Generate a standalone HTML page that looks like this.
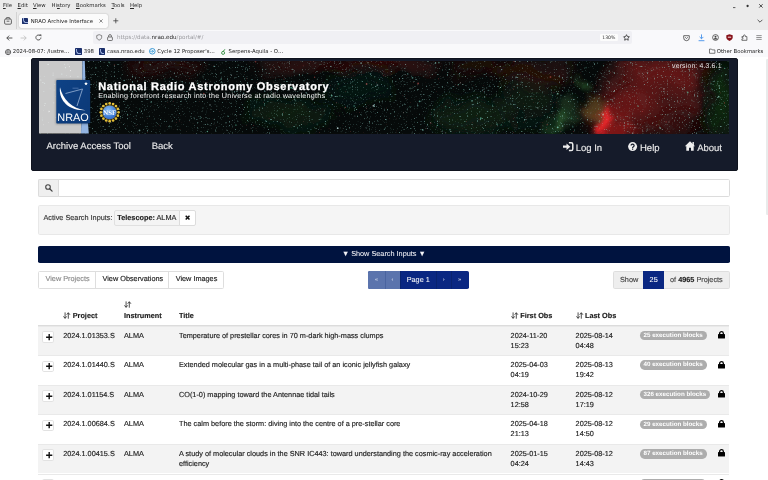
<!DOCTYPE html>
<html lang="en">
<head>
<meta charset="utf-8">
<title>NRAO Archive Interface</title>
<style>
*{box-sizing:border-box;margin:0;padding:0}
html,body{width:768px;height:480px;overflow:hidden;background:#fff}
body{position:relative;font-family:"Liberation Sans",sans-serif;color:#111;text-rendering:geometricPrecision}
#all{position:absolute;left:0;top:0;width:768px;height:480px;will-change:transform}
svg{display:block;overflow:visible}
/* ---------- browser chrome ---------- */
#chrome{position:absolute;left:0;top:0;width:768px;height:57px;background:#ebebeb;font-family:"DejaVu Sans","Liberation Sans",sans-serif;color:#222;overflow:hidden}
#menubar span{position:absolute;top:2.3px;font-size:5.33px;line-height:8px;color:#2a2a2a;white-space:nowrap}
.ic{position:absolute}
#tabsep{position:absolute;left:16.4px;top:12px;width:.6px;height:17px;background:#d2d2d2}
#tab{position:absolute;left:19px;top:13.7px;width:88.5px;height:14.3px;background:#fbfbfb;border-radius:2px;box-shadow:0 0 1.5px rgba(0,0,0,.32)}
.fav{position:absolute;width:6.3px;height:6.3px;background:#1b2f6b;border-radius:.4px}
.fav:after{content:"";position:absolute;left:1px;top:.8px;width:3.6px;height:3.6px;border-left:.6px solid #9fb2dd;border-bottom:.6px solid #9fb2dd;border-radius:0 0 0 3.6px}
#navbar{position:absolute;left:0;top:29.5px;width:768px;height:27.5px;background:#f9f9fb}
#urlbar{position:absolute;left:92.5px;top:31.4px;width:539.2px;height:12.2px;background:#f0f0f4;border-radius:2px}
.cfs{font-size:5.33px;line-height:8px;white-space:nowrap}
#zoomb{position:absolute;left:507.2px;top:2.3px;width:18.2px;height:7.5px;background:#fff;border-radius:1.2px;font-size:4.6px;line-height:10.1px;text-align:center;color:#333;background:#fcfcfc}
.bm{position:absolute;top:48.2px;font-size:5.33px;line-height:8px;color:#222;white-space:nowrap}
/* ---------- page ---------- */
#hdr{position:absolute;left:31px;top:57.5px;width:706.5px;height:113px;background:#151b2a;border-radius:2px;border:1px solid #0f131e}
#banner{position:absolute;left:38.6px;top:61px;width:690.5px;height:72.6px;overflow:hidden;background:#0a0d0a}
#banner svg{position:absolute;left:0;top:0}
.nav{position:absolute;font-size:9.5px;line-height:12px;color:#ececec;white-space:nowrap;-webkit-text-stroke:.12px currentColor}
.box{position:absolute;border:1px solid #e2e2e2;border-radius:1.6px}
.t{position:absolute;font-size:7.3px;line-height:10px;color:#1a1a1a;white-space:nowrap;-webkit-text-stroke:.14px currentColor}
.b{font-weight:bold}
.sort{position:absolute;width:7.4px;height:7.1px}
.row{position:absolute;left:38.2px;width:691.3px;height:29.6px}
.row:before{content:"";position:absolute;left:0;top:0;width:100%;height:1px;background:#e9e9e9}
.row.odd{background:#f3f3f3}
.row .t{top:5px}
.row .t.l2{top:15.2px}
.plus{position:absolute;left:4.3px;top:5.5px;width:12px;height:11.5px;background:#fff;border:1px solid #e2e2e2;border-radius:1.8px}
.badge{position:absolute;left:601.5px;top:5.4px;height:9.4px;border-radius:4.7px;background:#adadad;color:#fff;font-size:6.24px;font-weight:bold;line-height:9.3px;padding:0 3.8px;white-space:nowrap}
.lock{position:absolute;left:679.9px;top:5.5px;width:7px;height:7.6px;filter:drop-shadow(0 0 .6px #fff) drop-shadow(0 0 .6px #fff)}
#scroll{position:absolute;left:765.8px;top:59px;width:3px;height:156px;background:#e9ebeb;border-radius:1.2px 0 0 1.2px}
#scroll div{display:none}
.plus svg{position:absolute;left:2.4px;top:1.7px;width:6.4px;height:6.4px}
.t.pg{font-size:5.6px;-webkit-text-stroke:0}
.t.w{-webkit-text-stroke:.04px currentColor}
</style>
</head>
<body>
<div id="all">
<div id="chrome">
  <div id="menubar">
    <span style="left:3px"><u>F</u>ile</span>
    <span style="left:17.5px"><u>E</u>dit</span>
    <span style="left:33px"><u>V</u>iew</span>
    <span style="left:51.5px">Hi<u>s</u>tory</span>
    <span style="left:76px"><u>B</u>ookmarks</span>
    <span style="left:111.5px"><u>T</u>ools</span>
    <span style="left:130px"><u>H</u>elp</span>
  </div>
  <svg class="ic" style="left:733px;top:3px;width:30px;height:8px" viewBox="0 0 30 8"><path d="M0 4.6h2.4" stroke="#333" stroke-width=".8"/><circle cx="14.6" cy="3" r="1.15" fill="#333"/><path d="M26.2 1.2l3.4 3.4M29.6 1.2l-3.4 3.4" stroke="#222" stroke-width=".8"/></svg>
  <svg class="ic" style="left:757px;top:18.5px;width:6px;height:4px" viewBox="0 0 6 4"><path d="M.6.8L3 3.2 5.4.8" fill="none" stroke="#333" stroke-width=".8"/></svg>
  <svg class="ic" style="left:4px;top:16.5px;width:8px;height:8px" viewBox="0 0 8 8"><rect x=".6" y="2" width="6.8" height="5.2" rx="1.2" fill="none" stroke="#444" stroke-width=".8"/><path d="M2.2 2V1.2a.6.6 0 0 1 .6-.6h2.4a.6.6 0 0 1 .6.6V2M2.6 4.2h2.8" fill="none" stroke="#444" stroke-width=".8"/></svg>
  <div id="tabsep"></div>
  <div id="tab">
    <span class="fav" style="left:3px;top:4px"></span>
    <span class="cfs" style="position:absolute;left:11.7px;top:4.4px;color:#222">NRAO Archive Interface</span>
    <svg class="ic" style="left:79.5px;top:5.2px;width:4px;height:4px" viewBox="0 0 4 4"><path d="M.4.4l3.2 3.2M3.6.4L.4 3.6" stroke="#444" stroke-width=".6"/></svg>
  </div>
  <svg class="ic" style="left:112.5px;top:18px;width:5.6px;height:5.6px" viewBox="0 0 6 6"><path d="M3 .3v5.4M.3 3h5.4" stroke="#333" stroke-width=".8"/></svg>
  <div id="navbar"></div>
  <svg class="ic" style="left:5.9px;top:34.5px;width:7px;height:6px" viewBox="0 0 7 6"><path d="M6.4 3H.8M3.2.6L.8 3l2.4 2.4" fill="none" stroke="#333" stroke-width=".8"/></svg>
  <svg class="ic" style="left:19.9px;top:34.5px;width:7px;height:6px" viewBox="0 0 7 6"><path d="M.6 3h5.6M3.8.6L6.2 3 3.8 5.4" fill="none" stroke="#bdbdbd" stroke-width=".8"/></svg>
  <svg class="ic" style="left:35px;top:34px;width:7px;height:7px" viewBox="0 0 7 7"><path d="M5.9 3.5a2.5 2.5 0 1 1-.9-1.9" fill="none" stroke="#333" stroke-width=".8"/><path d="M4.2.5h2.1v2.1z" fill="#333"/></svg>
  <div id="urlbar">
    <svg class="ic" style="left:3.4px;top:3px;width:6.4px;height:6.6px" viewBox="0 0 7 7"><path d="M3.5.6L6.2 1.6V3.6C6.2 5 5 6 3.5 6.5 2 6 .8 5 .8 3.6V1.6z" fill="none" stroke="#555" stroke-width=".75"/></svg>
    <svg class="ic" style="left:14.5px;top:2.6px;width:6px;height:7px" viewBox="0 0 6 7"><rect x=".6" y="3" width="4.8" height="3.5" rx=".7" fill="none" stroke="#555" stroke-width=".8"/><path d="M1.6 3V2a1.4 1.4 0 0 1 2.8 0V3" fill="none" stroke="#555" stroke-width=".8"/></svg>
    <span class="cfs" style="position:absolute;left:24.5px;top:2.9px;font-size:5.62px;color:#9a9a9e">https://data.<span style="color:#222">nrao.edu</span>/portal/#/</span>
    <span id="zoomb">130%</span>
    <svg class="ic" style="left:530.1px;top:2.5px;width:7px;height:7px" viewBox="0 0 8 8"><path d="M4 .8l1 2.1 2.3.3-1.7 1.6.4 2.3L4 6 1.9 7.1l.4-2.3L.7 3.2 3 2.9z" fill="none" stroke="#333" stroke-width=".95" stroke-linejoin="round"/></svg>
  </div>
  <!-- toolbar icons right -->
  <svg class="ic" style="left:682.7px;top:34.5px;width:7px;height:6px" viewBox="0 0 7 6"><path d="M.7.7h5.6v2.2a2.8 2.8 0 0 1-5.6 0z" fill="none" stroke="#444" stroke-width=".8" stroke-linejoin="round"/><path d="M2.2 2.3l1.3 1.2 1.3-1.2" fill="none" stroke="#444" stroke-width=".8"/></svg>
  <svg class="ic" style="left:697.5px;top:33.8px;width:7px;height:7.4px" viewBox="0 0 7 7.4"><path d="M3.5.4v4.2M1.6 2.9l1.9 1.9 1.9-1.9M.6 6.7h5.8" fill="none" stroke="#3a8be8" stroke-width=".85"/></svg>
  <svg class="ic" style="left:711.6px;top:34px;width:7px;height:7px" viewBox="0 0 7 7"><circle cx="3.5" cy="3.5" r="2.9" fill="none" stroke="#444" stroke-width=".8"/><circle cx="3.5" cy="2.8" r="1" fill="#444"/><path d="M1.5 5.4a2.2 2.2 0 0 1 4 0z" fill="#444"/></svg>
  <svg class="ic" style="left:725.8px;top:34px;width:7px;height:7.2px" viewBox="0 0 7 7.2"><path d="M3.5.3L6.7 1.3V3.6C6.7 5.2 5.3 6.4 3.5 7 1.7 6.4.3 5.2.3 3.6V1.3z" fill="#86121a"/><rect x="1.8" y="2.6" width="3.4" height="1.4" rx=".5" fill="#d9a0a4"/></svg>
  <svg class="ic" style="left:740.6px;top:34px;width:7px;height:7px" viewBox="0 0 7 7"><path d="M.9 2.6h1.6v-.8a.9.9 0 0 1 1.8 0v.8h1.6v3.7H.9V4.9h.5a.7.7 0 0 0 0-1.4H.9z" fill="none" stroke="#444" stroke-width=".75" stroke-linejoin="round"/></svg>
  <svg class="ic" style="left:755.5px;top:35px;width:6px;height:5px" viewBox="0 0 6 5"><path d="M.3.6h5.4M.3 2.5h5.4M.3 4.4h5.4" stroke="#666" stroke-width=".7"/></svg>
  <!-- bookmarks -->
  <svg class="ic" style="left:5px;top:48.5px;width:6.2px;height:6.2px" viewBox="0 0 6.2 6.2"><circle cx="3.1" cy="3.1" r="2.6" fill="none" stroke="#444" stroke-width=".8"/><path d="M.5 3.1h5.2M3.1.5c-1.3 1.5-1.3 3.7 0 5.2M3.1.5c1.3 1.5 1.3 3.7 0 5.2" fill="none" stroke="#444" stroke-width=".55"/></svg>
  <span class="bm" style="left:12.8px">2024-08-07: /lustre…</span>
  <span class="fav" style="left:75.3px;top:48.3px"></span>
  <span class="bm" style="left:83.8px">398</span>
  <span class="fav" style="left:98.7px;top:48.3px"></span>
  <span class="bm" style="left:107px">casa.nrao.edu</span>
  <svg class="ic" style="left:148.8px;top:48.2px;width:6.6px;height:6.6px" viewBox="0 0 6.6 6.6"><circle cx="3.3" cy="3.3" r="2.8" fill="#fff" stroke="#2a8fd0" stroke-width=".9"/><path d="M2.6 1.8l2.2 1.5-2.2 1.5M.8 3.3h3.6" fill="none" stroke="#2a8fd0" stroke-width=".7"/></svg>
  <span class="bm" style="left:157.2px">Cycle 12 Proposer's…</span>
  <svg class="ic" style="left:221px;top:48.5px;width:4.6px;height:6px" viewBox="0 0 4.6 6"><circle cx="2.1" cy="3.9" r="1.5" fill="none" stroke="#2e8a3c" stroke-width=".9"/><path d="M2.4 2.2C2.6 1.2 3.2.7 4.2.6" fill="none" stroke="#2e8a3c" stroke-width=".8"/></svg>
  <span class="bm" style="left:228.5px">Serpens-Aquila - O…</span>
  <svg class="ic" style="left:708.7px;top:48.2px;width:6.4px;height:5.8px" viewBox="0 0 6.4 5.8"><path d="M.5 1.1h2l.7.8h2.7v3.4H.5z" fill="none" stroke="#444" stroke-width=".7" stroke-linejoin="round"/></svg>
  <span class="bm" style="left:716.8px">Other Bookmarks</span>
</div>
<div id="hdr"></div>
<div id="banner">
<svg width="691.5" height="72.5" viewBox="0 0 691.5 72.5">
<defs>
<filter id="bl" x="-30%" y="-30%" width="160%" height="160%"><feGaussianBlur stdDeviation="7"/></filter>
<filter id="warp" x="-5%" y="-20%" width="110%" height="140%"><feTurbulence type="fractalNoise" baseFrequency="0.035" numOctaves="3" seed="4" result="n"/><feDisplacementMap in="SourceGraphic" in2="n" scale="22" xChannelSelector="R" yChannelSelector="G"/></filter>
<filter id="bl4" x="-20%" y="-20%" width="140%" height="140%"><feGaussianBlur stdDeviation="1.2"/></filter>
<filter id="bl2" x="-30%" y="-30%" width="160%" height="160%"><feGaussianBlur stdDeviation="3.2"/></filter>
<filter id="spk" x="0" y="0" width="100%" height="100%"><feTurbulence type="fractalNoise" baseFrequency="0.6" numOctaves="2" seed="11"/><feColorMatrix values="0 0 0 0 .3  0 0 0 0 .68  0 0 0 0 .62  2.8 2.8 0 0 -3.3"/></filter>
<filter id="spkr" x="0" y="0" width="100%" height="100%"><feTurbulence type="fractalNoise" baseFrequency="0.7" numOctaves="1" seed="23"/><feColorMatrix values="0 0 0 0 .7  0 0 0 0 .12  0 0 0 0 .12  0 0 6 0 -4.25"/></filter>
<radialGradient id="globe" cx=".4" cy=".35" r=".75"><stop offset="0" stop-color="#8fc0f2"/><stop offset=".6" stop-color="#4585dc"/><stop offset="1" stop-color="#2a5cc0"/></radialGradient>
<linearGradient id="lg" x1="0" y1="0" x2="1" y2="1"><stop offset="0" stop-color="#0e4286"/><stop offset="1" stop-color="#0b3876"/></linearGradient>
</defs>
<rect width="691.5" height="72.5" fill="#060a0a"/>
<g filter="url(#warp)">
<ellipse cx="125" cy="5" rx="40" ry="9" fill="#4a1412" opacity="0.5" filter="url(#bl)"/>
<ellipse cx="265" cy="3" rx="50" ry="7" fill="#561614" opacity="0.6" filter="url(#bl)"/>
<ellipse cx="350" cy="3" rx="50" ry="6" fill="#601614" opacity="0.7" filter="url(#bl)"/>
<ellipse cx="440" cy="8" rx="30" ry="10" fill="#3a1810" opacity="0.5" filter="url(#bl)"/>
<ellipse cx="500" cy="12" rx="40" ry="14" fill="#3c1610" opacity="0.6" filter="url(#bl)"/>
<ellipse cx="250" cy="52" rx="45" ry="16" fill="#12301c" opacity="0.45" filter="url(#bl)"/>
<ellipse cx="320" cy="28" rx="35" ry="18" fill="#10281a" opacity="0.4" filter="url(#bl)"/>
<ellipse cx="430" cy="55" rx="45" ry="18" fill="#12301e" opacity="0.5" filter="url(#bl)"/>
<ellipse cx="490" cy="40" rx="30" ry="22" fill="#142c1c" opacity="0.45" filter="url(#bl)"/>
<ellipse cx="682" cy="40" rx="14" ry="36" fill="#08260f" opacity="0.95" filter="url(#bl)"/>
<ellipse cx="612" cy="34" rx="52" ry="42" fill="#4c1414" opacity="0.92" filter="url(#bl)"/>
<ellipse cx="628" cy="12" rx="40" ry="15" fill="#781a1a" opacity="0.55" filter="url(#bl)"/>
<ellipse cx="600" cy="40" rx="20" ry="14" fill="#7a1a1a" opacity="0.6" filter="url(#bl)"/>
<ellipse cx="645" cy="62" rx="28" ry="11" fill="#2a100c" opacity="0.55" filter="url(#bl)"/>
<ellipse cx="570" cy="58" rx="22" ry="17" fill="#8a1c1a" opacity="0.7" filter="url(#bl)"/>
<ellipse cx="556" cy="50" rx="11" ry="15" fill="#5a4420" opacity="0.85" filter="url(#bl2)"/>
<ellipse cx="531" cy="54" rx="11" ry="14" fill="#27482a" opacity="0.55" filter="url(#bl2)"/>
<ellipse cx="516" cy="64" rx="12" ry="8" fill="#1f4a26" opacity="0.6" filter="url(#bl2)"/>
<ellipse cx="527" cy="60" rx="6" ry="6" fill="#427a3c" opacity="0.4" filter="url(#bl2)"/>
<ellipse cx="547" cy="24" rx="5" ry="6" fill="#3a7a3a" opacity="0.55" filter="url(#bl2)"/>
<ellipse cx="564" cy="61" rx="8" ry="15" fill="#e8282c" opacity=".95" filter="url(#bl2)" transform="rotate(25 564 61)"/>
<ellipse cx="582" cy="70" rx="18" ry="4" fill="#b01e1c" opacity="0.6" filter="url(#bl2)"/>
</g>
<rect width="691.5" height="72.5" filter="url(#spk)" opacity=".58"/>
<rect width="691.5" height="72.5" filter="url(#spkr)" opacity=".45"/>
<g>
<circle cx="255.0" cy="10.9" r="0.8" fill="#9ed" opacity="0.24"/>
<circle cx="391.9" cy="26.5" r="0.45" fill="#6ca" opacity="0.22"/>
<circle cx="325.9" cy="5.1" r="0.45" fill="#8bb" opacity="0.23"/>
<circle cx="411.0" cy="68.7" r="0.8" fill="#9ed" opacity="0.52"/>
<circle cx="302.1" cy="70.8" r="0.45" fill="#bfe" opacity="0.36"/>
<circle cx="139.1" cy="8.5" r="0.55" fill="#bfe" opacity="0.26"/>
<circle cx="414.7" cy="13.6" r="0.45" fill="#7cb" opacity="0.51"/>
<circle cx="445.6" cy="36.0" r="0.7" fill="#8bb" opacity="0.63"/>
<circle cx="346.5" cy="66.9" r="0.55" fill="#8dc" opacity="0.34"/>
<circle cx="162.0" cy="56.5" r="0.45" fill="#8dc" opacity="0.49"/>
<circle cx="610.9" cy="52.9" r="0.55" fill="#7cb" opacity="0.26"/>
<circle cx="315.9" cy="54.9" r="0.5" fill="#dff" opacity="0.43"/>
<circle cx="667.0" cy="5.6" r="0.7" fill="#c55" opacity="0.39"/>
<circle cx="272.0" cy="36.0" r="0.9" fill="#dff" opacity="0.24"/>
<circle cx="106.4" cy="19.6" r="0.8" fill="#7cb" opacity="0.23"/>
<circle cx="498.8" cy="46.9" r="0.8" fill="#dff" opacity="0.36"/>
<circle cx="295.0" cy="48.5" r="0.45" fill="#dff" opacity="0.40"/>
<circle cx="440.3" cy="35.8" r="0.5" fill="#8dc" opacity="0.27"/>
<circle cx="205.8" cy="28.3" r="0.9" fill="#dff" opacity="0.24"/>
<circle cx="336.0" cy="39.8" r="0.5" fill="#8bb" opacity="0.68"/>
<circle cx="225.7" cy="30.1" r="0.55" fill="#8bb" opacity="0.73"/>
<circle cx="143.4" cy="12.8" r="0.5" fill="#6ca" opacity="0.21"/>
<circle cx="582.5" cy="13.2" r="0.55" fill="#9ed" opacity="0.28"/>
<circle cx="391.1" cy="44.2" r="0.55" fill="#bfe" opacity="0.58"/>
<circle cx="378.7" cy="44.8" r="0.8" fill="#9ed" opacity="0.45"/>
<circle cx="608.2" cy="69.0" r="0.8" fill="#8bb" opacity="0.42"/>
<circle cx="300.4" cy="34.9" r="0.6" fill="#9ed" opacity="0.30"/>
<circle cx="681.6" cy="31.9" r="0.45" fill="#c55" opacity="0.53"/>
<circle cx="112.1" cy="41.1" r="0.7" fill="#7cb" opacity="0.72"/>
<circle cx="442.2" cy="5.1" r="0.5" fill="#8bb" opacity="0.28"/>
<circle cx="208.8" cy="25.2" r="0.55" fill="#dff" opacity="0.27"/>
<circle cx="594.0" cy="72.0" r="0.6" fill="#dff" opacity="0.47"/>
<circle cx="101.4" cy="7.4" r="0.55" fill="#8dc" opacity="0.46"/>
<circle cx="492.7" cy="37.4" r="0.5" fill="#c55" opacity="0.28"/>
<circle cx="396.6" cy="2.0" r="0.7" fill="#8dc" opacity="0.74"/>
<circle cx="603.3" cy="50.5" r="0.55" fill="#c55" opacity="0.70"/>
<circle cx="275.6" cy="16.2" r="0.7" fill="#c55" opacity="0.55"/>
<circle cx="441.8" cy="57.2" r="0.9" fill="#6ca" opacity="0.64"/>
<circle cx="574.2" cy="53.6" r="0.5" fill="#6ca" opacity="0.48"/>
<circle cx="275.5" cy="2.1" r="0.45" fill="#8dc" opacity="0.46"/>
<circle cx="171.0" cy="43.9" r="0.55" fill="#dff" opacity="0.64"/>
<circle cx="512.8" cy="25.3" r="0.55" fill="#7cb" opacity="0.32"/>
<circle cx="192.4" cy="14.3" r="0.5" fill="#dff" opacity="0.54"/>
<circle cx="627.1" cy="60.9" r="0.6" fill="#c55" opacity="0.64"/>
<circle cx="100.7" cy="47.9" r="0.6" fill="#6ca" opacity="0.46"/>
<circle cx="161.2" cy="57.2" r="0.55" fill="#7cb" opacity="0.64"/>
<circle cx="673.2" cy="28.7" r="0.6" fill="#7cb" opacity="0.60"/>
<circle cx="155.7" cy="9.2" r="0.5" fill="#dff" opacity="0.64"/>
<circle cx="140.4" cy="59.9" r="0.6" fill="#c55" opacity="0.29"/>
<circle cx="399.9" cy="1.6" r="0.9" fill="#7cb" opacity="0.49"/>
<circle cx="648.7" cy="31.5" r="0.9" fill="#6ca" opacity="0.65"/>
<circle cx="182.2" cy="18.3" r="0.55" fill="#6ca" opacity="0.62"/>
<circle cx="256.4" cy="39.5" r="0.9" fill="#bfe" opacity="0.23"/>
<circle cx="523.6" cy="65.1" r="0.8" fill="#8bb" opacity="0.65"/>
<circle cx="612.9" cy="9.5" r="0.5" fill="#9ed" opacity="0.68"/>
<circle cx="547.2" cy="44.1" r="0.9" fill="#bfe" opacity="0.29"/>
<circle cx="351.6" cy="52.6" r="0.7" fill="#9ed" opacity="0.38"/>
<circle cx="380.6" cy="40.3" r="0.9" fill="#7cb" opacity="0.69"/>
<circle cx="82.7" cy="13.9" r="0.45" fill="#7cb" opacity="0.48"/>
<circle cx="408.6" cy="55.1" r="0.45" fill="#dff" opacity="0.38"/>
<circle cx="674.3" cy="43.9" r="0.5" fill="#8dc" opacity="0.45"/>
<circle cx="390.2" cy="34.7" r="0.5" fill="#8dc" opacity="0.71"/>
<circle cx="622.3" cy="14.7" r="0.6" fill="#bfe" opacity="0.43"/>
<circle cx="299.3" cy="22.9" r="0.8" fill="#6ca" opacity="0.44"/>
<circle cx="183.3" cy="22.0" r="0.45" fill="#bfe" opacity="0.72"/>
<circle cx="461.4" cy="26.5" r="0.55" fill="#bfe" opacity="0.73"/>
<circle cx="187.7" cy="69.1" r="0.6" fill="#dff" opacity="0.29"/>
<circle cx="477.1" cy="16.2" r="0.8" fill="#8bb" opacity="0.75"/>
<circle cx="306.7" cy="30.5" r="0.55" fill="#c55" opacity="0.25"/>
<circle cx="282.2" cy="24.5" r="0.6" fill="#dff" opacity="0.59"/>
<circle cx="294.1" cy="37.5" r="0.55" fill="#7cb" opacity="0.26"/>
<circle cx="638.9" cy="16.6" r="0.45" fill="#7cb" opacity="0.35"/>
<circle cx="71.6" cy="56.5" r="0.55" fill="#bfe" opacity="0.65"/>
<circle cx="594.4" cy="49.0" r="0.55" fill="#8bb" opacity="0.28"/>
<circle cx="639.3" cy="41.4" r="0.8" fill="#c55" opacity="0.25"/>
<circle cx="83.1" cy="49.9" r="0.6" fill="#7cb" opacity="0.35"/>
<circle cx="56.9" cy="6.4" r="0.55" fill="#7cb" opacity="0.53"/>
<circle cx="189.6" cy="19.2" r="0.45" fill="#dff" opacity="0.21"/>
<circle cx="687.8" cy="30.3" r="0.55" fill="#bfe" opacity="0.22"/>
<circle cx="504.0" cy="68.0" r="0.5" fill="#8dc" opacity="0.23"/>
<circle cx="176.2" cy="22.6" r="0.55" fill="#6ca" opacity="0.36"/>
<circle cx="368.8" cy="12.9" r="0.55" fill="#9ed" opacity="0.75"/>
<circle cx="69.9" cy="1.3" r="0.7" fill="#6ca" opacity="0.48"/>
<circle cx="204.6" cy="32.4" r="0.8" fill="#8bb" opacity="0.56"/>
<circle cx="398.4" cy="64.4" r="0.7" fill="#8dc" opacity="0.58"/>
<circle cx="680.2" cy="24.8" r="0.9" fill="#bfe" opacity="0.42"/>
<circle cx="270.3" cy="3.9" r="0.5" fill="#9ed" opacity="0.24"/>
<circle cx="524.2" cy="18.5" r="0.5" fill="#9ed" opacity="0.25"/>
<circle cx="589.0" cy="63.1" r="0.8" fill="#8dc" opacity="0.53"/>
<circle cx="493.1" cy="3.3" r="0.5" fill="#bfe" opacity="0.35"/>
<circle cx="48.3" cy="26.4" r="0.55" fill="#c55" opacity="0.33"/>
<circle cx="669.3" cy="22.4" r="0.55" fill="#bfe" opacity="0.20"/>
<circle cx="292.3" cy="34.4" r="0.7" fill="#6ca" opacity="0.34"/>
<circle cx="547.1" cy="6.6" r="0.9" fill="#7cb" opacity="0.28"/>
<circle cx="424.8" cy="28.6" r="0.55" fill="#8dc" opacity="0.55"/>
<circle cx="100.5" cy="69.4" r="0.9" fill="#bfe" opacity="0.56"/>
<circle cx="508.2" cy="63.7" r="0.6" fill="#c55" opacity="0.60"/>
<circle cx="365.0" cy="20.6" r="0.7" fill="#bfe" opacity="0.22"/>
<circle cx="585.2" cy="64.7" r="0.8" fill="#8bb" opacity="0.60"/>
<circle cx="570.3" cy="10.1" r="0.7" fill="#9ed" opacity="0.65"/>
<circle cx="423.0" cy="64.7" r="0.8" fill="#6ca" opacity="0.25"/>
<circle cx="73.0" cy="46.2" r="0.45" fill="#8bb" opacity="0.66"/>
<circle cx="406.5" cy="45.5" r="0.8" fill="#6ca" opacity="0.47"/>
<circle cx="48.1" cy="57.8" r="0.8" fill="#7cb" opacity="0.56"/>
<circle cx="88.6" cy="53.4" r="0.55" fill="#7cb" opacity="0.67"/>
<circle cx="197.6" cy="54.8" r="0.5" fill="#dff" opacity="0.47"/>
<circle cx="292.9" cy="34.7" r="0.8" fill="#8dc" opacity="0.62"/>
<circle cx="444.3" cy="46.6" r="0.45" fill="#bfe" opacity="0.38"/>
<circle cx="466.6" cy="50.2" r="0.7" fill="#bfe" opacity="0.21"/>
<circle cx="85.2" cy="19.5" r="0.8" fill="#7cb" opacity="0.58"/>
<circle cx="482.2" cy="21.1" r="0.7" fill="#8dc" opacity="0.46"/>
<circle cx="347.0" cy="8.6" r="0.7" fill="#6ca" opacity="0.37"/>
<circle cx="101.4" cy="34.3" r="0.55" fill="#dff" opacity="0.24"/>
<circle cx="373.0" cy="72.1" r="0.55" fill="#8bb" opacity="0.32"/>
<circle cx="656.4" cy="15.3" r="0.7" fill="#7cb" opacity="0.28"/>
<circle cx="384.3" cy="69.1" r="0.5" fill="#8dc" opacity="0.69"/>
<circle cx="500.0" cy="16.8" r="0.6" fill="#8bb" opacity="0.21"/>
<circle cx="48.3" cy="35.6" r="0.6" fill="#8bb" opacity="0.37"/>
<circle cx="136.8" cy="24.9" r="0.55" fill="#7cb" opacity="0.66"/>
<circle cx="47.1" cy="54.4" r="0.9" fill="#8bb" opacity="0.27"/>
<circle cx="644.0" cy="51.7" r="0.8" fill="#8dc" opacity="0.34"/>
<circle cx="87.9" cy="28.3" r="0.9" fill="#7cb" opacity="0.40"/>
<circle cx="322.3" cy="19.9" r="0.45" fill="#8dc" opacity="0.26"/>
<circle cx="584.8" cy="20.7" r="0.5" fill="#6ca" opacity="0.73"/>
<circle cx="327.6" cy="22.9" r="0.9" fill="#c55" opacity="0.63"/>
<circle cx="322.1" cy="2.1" r="0.9" fill="#8bb" opacity="0.70"/>
<circle cx="653.2" cy="39.8" r="0.8" fill="#7cb" opacity="0.23"/>
<circle cx="518.7" cy="32.7" r="0.9" fill="#bfe" opacity="0.55"/>
<circle cx="230.7" cy="3.6" r="0.7" fill="#bfe" opacity="0.29"/>
<circle cx="313.8" cy="20.4" r="0.55" fill="#8dc" opacity="0.42"/>
<circle cx="200.1" cy="35.0" r="0.8" fill="#8bb" opacity="0.27"/>
<circle cx="461.2" cy="5.4" r="0.7" fill="#dff" opacity="0.50"/>
<circle cx="338.4" cy="24.1" r="0.9" fill="#dff" opacity="0.44"/>
<circle cx="399.6" cy="17.7" r="0.5" fill="#c55" opacity="0.51"/>
<circle cx="252.1" cy="26.7" r="0.9" fill="#6ca" opacity="0.69"/>
<circle cx="529.9" cy="29.9" r="0.6" fill="#6ca" opacity="0.41"/>
<circle cx="264.3" cy="4.5" r="0.55" fill="#c55" opacity="0.27"/>
<circle cx="370.9" cy="45.6" r="0.9" fill="#6ca" opacity="0.25"/>
<circle cx="624.9" cy="27.9" r="0.8" fill="#dff" opacity="0.44"/>
<circle cx="247.4" cy="59.0" r="0.45" fill="#bfe" opacity="0.22"/>
<circle cx="504.0" cy="64.9" r="0.6" fill="#dff" opacity="0.20"/>
<circle cx="298.7" cy="67.2" r="0.9" fill="#dff" opacity="0.73"/>
<circle cx="206.4" cy="7.9" r="0.5" fill="#bfe" opacity="0.49"/>
<circle cx="486.3" cy="68.3" r="0.8" fill="#dff" opacity="0.25"/>
<circle cx="547.5" cy="0.1" r="0.5" fill="#6ca" opacity="0.51"/>
<circle cx="70.3" cy="51.8" r="0.5" fill="#8dc" opacity="0.49"/>
<circle cx="328.4" cy="55.4" r="0.45" fill="#7cb" opacity="0.37"/>
<circle cx="655.1" cy="13.9" r="0.55" fill="#6ca" opacity="0.63"/>
<circle cx="46.7" cy="39.0" r="0.6" fill="#8dc" opacity="0.73"/>
<circle cx="462.1" cy="64.1" r="0.6" fill="#6ca" opacity="0.50"/>
<circle cx="64.9" cy="29.9" r="0.8" fill="#8dc" opacity="0.23"/>
<circle cx="171.3" cy="64.2" r="0.8" fill="#8bb" opacity="0.24"/>
<circle cx="193.1" cy="30.8" r="0.55" fill="#6ca" opacity="0.47"/>
<circle cx="495.2" cy="52.1" r="0.55" fill="#8bb" opacity="0.31"/>
<circle cx="560.5" cy="53.6" r="0.7" fill="#7cb" opacity="0.31"/>
<circle cx="672.0" cy="22.6" r="0.9" fill="#6ca" opacity="0.33"/>
<circle cx="188.9" cy="55.1" r="0.55" fill="#7cb" opacity="0.72"/>
<circle cx="366.0" cy="13.6" r="0.5" fill="#dff" opacity="0.43"/>
<circle cx="475.4" cy="68.8" r="0.5" fill="#8bb" opacity="0.23"/>
<circle cx="61.3" cy="43.2" r="0.6" fill="#9ed" opacity="0.59"/>
<circle cx="164.8" cy="32.6" r="0.8" fill="#c55" opacity="0.60"/>
<circle cx="689.9" cy="67.5" r="0.55" fill="#6ca" opacity="0.30"/>
<circle cx="650.1" cy="54.1" r="0.45" fill="#8dc" opacity="0.57"/>
<circle cx="290.4" cy="27.1" r="0.55" fill="#dff" opacity="0.29"/>
<circle cx="47.9" cy="20.3" r="0.55" fill="#8bb" opacity="0.73"/>
<circle cx="125.9" cy="69.9" r="0.5" fill="#8bb" opacity="0.40"/>
<circle cx="576.3" cy="59.6" r="0.6" fill="#7cb" opacity="0.23"/>
<circle cx="351.6" cy="27.0" r="0.6" fill="#6ca" opacity="0.38"/>
<circle cx="521.9" cy="34.4" r="0.8" fill="#8bb" opacity="0.34"/>
<circle cx="449.7" cy="29.3" r="0.6" fill="#9ed" opacity="0.46"/>
<circle cx="564.6" cy="4.5" r="0.5" fill="#7cb" opacity="0.69"/>
<circle cx="264.9" cy="19.7" r="0.7" fill="#9ed" opacity="0.34"/>
<circle cx="508.6" cy="22.9" r="0.55" fill="#8dc" opacity="0.20"/>
<circle cx="533.8" cy="66.4" r="0.8" fill="#7cb" opacity="0.21"/>
<circle cx="197.0" cy="34.5" r="0.6" fill="#8bb" opacity="0.63"/>
<circle cx="635.7" cy="59.1" r="0.5" fill="#dff" opacity="0.30"/>
<circle cx="564.1" cy="53.5" r="0.9" fill="#bfe" opacity="0.53"/>
<circle cx="257.6" cy="23.2" r="0.55" fill="#7cb" opacity="0.48"/>
<circle cx="298.8" cy="11.6" r="0.6" fill="#7cb" opacity="0.56"/>
<circle cx="356.9" cy="39.5" r="0.5" fill="#8bb" opacity="0.69"/>
<circle cx="683.6" cy="19.2" r="0.45" fill="#6ca" opacity="0.25"/>
<circle cx="367.8" cy="51.5" r="0.6" fill="#bfe" opacity="0.33"/>
<circle cx="315.1" cy="45.0" r="0.8" fill="#6ca" opacity="0.61"/>
<circle cx="592.7" cy="48.2" r="0.45" fill="#8dc" opacity="0.36"/>
<circle cx="411.9" cy="27.0" r="0.8" fill="#8dc" opacity="0.31"/>
<circle cx="205.7" cy="17.8" r="0.5" fill="#8dc" opacity="0.69"/>
<circle cx="419.3" cy="23.7" r="0.6" fill="#8dc" opacity="0.75"/>
<circle cx="373.5" cy="16.8" r="0.9" fill="#7cb" opacity="0.56"/>
<circle cx="685.7" cy="7.4" r="0.6" fill="#6ca" opacity="0.66"/>
<circle cx="636.2" cy="2.9" r="0.55" fill="#6ca" opacity="0.27"/>
<circle cx="168.4" cy="70.5" r="0.7" fill="#6ca" opacity="0.71"/>
<circle cx="286.3" cy="62.8" r="0.6" fill="#8dc" opacity="0.63"/>
<circle cx="475.1" cy="0.5" r="0.8" fill="#c55" opacity="0.32"/>
<circle cx="284.0" cy="10.2" r="0.5" fill="#8dc" opacity="0.22"/>
<circle cx="518.7" cy="66.3" r="0.9" fill="#9ed" opacity="0.65"/>
<circle cx="310.0" cy="27.0" r="0.7" fill="#8dc" opacity="0.24"/>
<circle cx="66.3" cy="35.9" r="0.6" fill="#7cb" opacity="0.42"/>
<circle cx="559.7" cy="48.1" r="0.5" fill="#7cb" opacity="0.56"/>
<circle cx="302.8" cy="19.7" r="0.55" fill="#8dc" opacity="0.43"/>
<circle cx="79.2" cy="54.0" r="0.55" fill="#8bb" opacity="0.43"/>
<circle cx="603.9" cy="72.3" r="0.55" fill="#6ca" opacity="0.41"/>
<circle cx="307.4" cy="68.3" r="0.6" fill="#bfe" opacity="0.43"/>
<circle cx="575.5" cy="29.5" r="0.55" fill="#dff" opacity="0.63"/>
<circle cx="129.9" cy="3.7" r="0.5" fill="#8bb" opacity="0.25"/>
<circle cx="447.6" cy="26.9" r="0.7" fill="#bfe" opacity="0.28"/>
<circle cx="228.9" cy="37.8" r="0.45" fill="#7cb" opacity="0.41"/>
<circle cx="532.4" cy="57.4" r="0.9" fill="#6ca" opacity="0.37"/>
<circle cx="586.5" cy="3.2" r="0.6" fill="#c55" opacity="0.23"/>
<circle cx="643.8" cy="28.1" r="0.8" fill="#bfe" opacity="0.55"/>
<circle cx="598.9" cy="45.0" r="0.7" fill="#6ca" opacity="0.66"/>
<circle cx="164.1" cy="15.8" r="0.6" fill="#bfe" opacity="0.41"/>
<circle cx="125.4" cy="17.9" r="0.8" fill="#6ca" opacity="0.22"/>
<circle cx="409.0" cy="54.9" r="0.45" fill="#c55" opacity="0.26"/>
<circle cx="433.0" cy="39.9" r="0.8" fill="#8dc" opacity="0.56"/>
<circle cx="245.0" cy="18.1" r="0.6" fill="#c55" opacity="0.45"/>
<circle cx="329.0" cy="1.7" r="0.7" fill="#dff" opacity="0.46"/>
<circle cx="334.4" cy="44.8" r="0.9" fill="#dff" opacity="0.66"/>
<circle cx="569.2" cy="29.0" r="0.45" fill="#bfe" opacity="0.40"/>
<circle cx="281.8" cy="58.2" r="0.7" fill="#9ed" opacity="0.22"/>
<circle cx="130.1" cy="66.9" r="0.55" fill="#7cb" opacity="0.23"/>
<circle cx="371.3" cy="27.4" r="0.9" fill="#bfe" opacity="0.21"/>
<circle cx="88.8" cy="44.5" r="0.8" fill="#7cb" opacity="0.31"/>
<circle cx="679.7" cy="35.7" r="0.9" fill="#bfe" opacity="0.58"/>
<circle cx="511.5" cy="16.0" r="0.9" fill="#c55" opacity="0.54"/>
<circle cx="208.8" cy="23.5" r="0.7" fill="#8dc" opacity="0.70"/>
<circle cx="340.6" cy="18.4" r="0.6" fill="#6ca" opacity="0.53"/>
<circle cx="443.5" cy="17.2" r="0.55" fill="#9ed" opacity="0.31"/>
<circle cx="306.4" cy="46.2" r="0.55" fill="#c55" opacity="0.69"/>
<circle cx="154.9" cy="56.9" r="0.45" fill="#9ed" opacity="0.55"/>
<circle cx="278.2" cy="63.3" r="0.7" fill="#7cb" opacity="0.34"/>
<circle cx="391.8" cy="62.1" r="0.8" fill="#c55" opacity="0.35"/>
<circle cx="685.4" cy="41.9" r="0.55" fill="#c55" opacity="0.62"/>
<circle cx="331.5" cy="12.8" r="0.8" fill="#9ed" opacity="0.36"/>
<circle cx="379.1" cy="22.5" r="0.9" fill="#c55" opacity="0.60"/>
<circle cx="528.3" cy="16.1" r="0.55" fill="#8bb" opacity="0.43"/>
<circle cx="281.0" cy="3.5" r="0.6" fill="#6ca" opacity="0.54"/>
<circle cx="75.4" cy="3.9" r="0.7" fill="#c55" opacity="0.37"/>
<circle cx="383.7" cy="38.7" r="0.6" fill="#8dc" opacity="0.52"/>
<circle cx="177.8" cy="45.2" r="0.6" fill="#bfe" opacity="0.27"/>
<circle cx="650.6" cy="17.7" r="0.5" fill="#dff" opacity="0.25"/>
<circle cx="458.0" cy="63.2" r="0.9" fill="#8dc" opacity="0.42"/>
<circle cx="216.6" cy="0.8" r="0.8" fill="#c55" opacity="0.53"/>
<circle cx="419.4" cy="43.6" r="0.7" fill="#dff" opacity="0.34"/>
<circle cx="629.2" cy="3.2" r="0.7" fill="#9ed" opacity="0.42"/>
<circle cx="199.4" cy="4.2" r="0.9" fill="#7cb" opacity="0.21"/>
<circle cx="401.6" cy="68.2" r="0.5" fill="#8bb" opacity="0.31"/>
<circle cx="438.5" cy="36.8" r="0.8" fill="#8bb" opacity="0.65"/>
<circle cx="158.7" cy="22.4" r="0.55" fill="#9ed" opacity="0.75"/>
<circle cx="513.5" cy="34.6" r="0.7" fill="#9ed" opacity="0.41"/>
<circle cx="327.9" cy="66.1" r="0.45" fill="#dff" opacity="0.30"/>
<circle cx="689.3" cy="19.0" r="0.8" fill="#9ed" opacity="0.27"/>
<circle cx="621.3" cy="67.1" r="0.9" fill="#8dc" opacity="0.59"/>
<circle cx="217.7" cy="40.1" r="0.6" fill="#8dc" opacity="0.36"/>
<circle cx="645.4" cy="64.8" r="0.45" fill="#9ed" opacity="0.29"/>
<circle cx="630.0" cy="61.0" r="0.5" fill="#bfe" opacity="0.61"/>
<circle cx="257.0" cy="63.8" r="0.55" fill="#6ca" opacity="0.41"/>
<circle cx="595.9" cy="66.8" r="0.8" fill="#dff" opacity="0.46"/>
<circle cx="388.5" cy="0.5" r="0.45" fill="#8bb" opacity="0.73"/>
<circle cx="196.9" cy="64.1" r="0.9" fill="#6ca" opacity="0.42"/>
<circle cx="423.8" cy="41.0" r="0.5" fill="#bfe" opacity="0.22"/>
</g>
<path d="M0 0H43.400C43.200 25 42.800 50 42 72.500H0z" fill="#c9c9c9"/>
<path d="M43.400 0H45.800C46.400 25 48 50 49.800 72.500H42C42.800 50 43.200 25 43.400 0z" fill="#93b4e2"/>
<circle cx="5.5" cy="44.5" r="0.4" fill="#f2f2f2" opacity="0.99"/>
<circle cx="29.0" cy="3.2" r="0.4" fill="#e6f0ee" opacity="0.85"/>
<circle cx="30.5" cy="5.6" r="0.6" fill="#f2f2f2" opacity="0.60"/>
<circle cx="39.2" cy="38.4" r="0.6" fill="#e6f0ee" opacity="0.94"/>
<circle cx="31.2" cy="50.8" r="0.5" fill="#e6f0ee" opacity="0.62"/>
<circle cx="9.1" cy="3.4" r="0.6" fill="#e6f0ee" opacity="0.91"/>
<circle cx="26.3" cy="21.1" r="0.4" fill="#dfeaea" opacity="0.55"/>
<circle cx="31.3" cy="15.3" r="0.5" fill="#f2f2f2" opacity="0.71"/>
<circle cx="1.8" cy="19.0" r="0.5" fill="#e6f0ee" opacity="0.86"/>
<circle cx="15.7" cy="23.5" r="0.6" fill="#d9e4e0" opacity="0.93"/>
<circle cx="25.7" cy="3.2" r="0.5" fill="#e6f0ee" opacity="0.72"/>
<circle cx="31.9" cy="25.3" r="0.6" fill="#e6f0ee" opacity="0.77"/>
<circle cx="9.7" cy="61.4" r="0.4" fill="#f2f2f2" opacity="0.59"/>
<circle cx="1.1" cy="15.1" r="0.4" fill="#e6f0ee" opacity="0.67"/>
<circle cx="4.8" cy="49.7" r="0.4" fill="#d9e4e0" opacity="0.80"/>
<circle cx="39.3" cy="37.1" r="0.6" fill="#dfeaea" opacity="0.64"/>
<circle cx="9.6" cy="50.0" r="0.5" fill="#dfeaea" opacity="0.55"/>
<circle cx="26.5" cy="6.7" r="0.6" fill="#e6f0ee" opacity="0.81"/>
<circle cx="15.2" cy="29.1" r="0.5" fill="#e6f0ee" opacity="0.71"/>
<circle cx="26.8" cy="27.0" r="0.5" fill="#f2f2f2" opacity="0.71"/>
<circle cx="22.8" cy="13.0" r="0.6" fill="#dfeaea" opacity="0.97"/>
<circle cx="6.1" cy="42.6" r="0.6" fill="#e6f0ee" opacity="0.67"/>
<circle cx="14.1" cy="11.9" r="0.5" fill="#f2f2f2" opacity="0.58"/>
<circle cx="18.6" cy="55.1" r="0.6" fill="#dfeaea" opacity="0.56"/>
<circle cx="19.5" cy="63.0" r="0.4" fill="#dfeaea" opacity="0.63"/>
<circle cx="31.2" cy="58.9" r="0.6" fill="#dfeaea" opacity="0.86"/>
<circle cx="40.0" cy="51.6" r="0.6" fill="#f2f2f2" opacity="0.58"/>
<circle cx="14.1" cy="14.2" r="0.6" fill="#e6f0ee" opacity="0.58"/>
<circle cx="27.3" cy="14.7" r="0.4" fill="#dfeaea" opacity="0.90"/>
<circle cx="30.3" cy="31.4" r="0.4" fill="#e6f0ee" opacity="0.82"/>
<circle cx="5.3" cy="15.5" r="0.5" fill="#d9e4e0" opacity="0.52"/>
<circle cx="17.0" cy="56.4" r="0.6" fill="#dfeaea" opacity="0.75"/>
<circle cx="26.3" cy="33.4" r="0.4" fill="#f2f2f2" opacity="0.80"/>
<circle cx="17.2" cy="52.9" r="0.5" fill="#d9e4e0" opacity="0.92"/>
<circle cx="27.7" cy="46.7" r="0.6" fill="#dfeaea" opacity="0.84"/>
<circle cx="26.7" cy="32.8" r="0.5" fill="#f2f2f2" opacity="0.81"/>
<circle cx="4.9" cy="30.4" r="0.5" fill="#dfeaea" opacity="0.63"/>
<circle cx="17.9" cy="32.9" r="0.6" fill="#d9e4e0" opacity="0.76"/>
<circle cx="27.4" cy="62.1" r="0.6" fill="#f2f2f2" opacity="0.89"/>
<circle cx="16.5" cy="35.3" r="0.4" fill="#e6f0ee" opacity="0.63"/>
<circle cx="9.7" cy="51.1" r="0.4" fill="#f2f2f2" opacity="0.55"/>
<circle cx="24.0" cy="38.9" r="0.6" fill="#d9e4e0" opacity="0.76"/>
<circle cx="26.6" cy="59.0" r="0.6" fill="#f2f2f2" opacity="0.71"/>
<circle cx="38.9" cy="15.7" r="0.6" fill="#dfeaea" opacity="0.70"/>
<circle cx="31.5" cy="9.6" r="0.6" fill="#f2f2f2" opacity="0.82"/>
<circle cx="11.1" cy="27.7" r="0.4" fill="#e6f0ee" opacity="0.54"/>
<circle cx="37.6" cy="45.0" r="0.6" fill="#f2f2f2" opacity="0.79"/>
<circle cx="5.4" cy="22.2" r="0.5" fill="#dfeaea" opacity="1.00"/>
<circle cx="39.4" cy="33.3" r="0.4" fill="#dfeaea" opacity="0.96"/>
<circle cx="3.8" cy="56.9" r="0.4" fill="#d9e4e0" opacity="0.82"/>
<circle cx="29.8" cy="58.0" r="0.4" fill="#f2f2f2" opacity="0.83"/>
<circle cx="34.2" cy="56.7" r="0.5" fill="#d9e4e0" opacity="1.00"/>
<circle cx="31.4" cy="46.5" r="0.5" fill="#f2f2f2" opacity="0.89"/>
<circle cx="10.2" cy="50.3" r="0.6" fill="#f2f2f2" opacity="0.99"/>
<circle cx="28.2" cy="34.7" r="0.6" fill="#f2f2f2" opacity="0.68"/>
<circle cx="27.2" cy="23.4" r="0.5" fill="#d9e4e0" opacity="0.81"/>
<circle cx="4.4" cy="63.8" r="0.4" fill="#f2f2f2" opacity="0.93"/>
<circle cx="3.3" cy="59.0" r="0.5" fill="#dfeaea" opacity="0.77"/>
<circle cx="14.8" cy="41.8" r="0.6" fill="#e6f0ee" opacity="0.60"/>
<circle cx="3.9" cy="21.5" r="0.6" fill="#e6f0ee" opacity="0.79"/>
<rect x="16.800" y="18.600" width="34.900" height="44.500" fill="#000" opacity=".3" filter="url(#bl4)"/>
<rect x="17.3" y="19.1" width="33.9" height="43.5" rx=".8" fill="url(#lg)"/>
<path d="M21 26.300C19.600 37 27 50 46.600 49.200 33 48 23.800 38.500 21 26.300z" fill="#fff"/>
<path d="M26.500 32.500L43.500 28 38 45" fill="none" stroke="#b9cdea" stroke-width=".65"/>
<path d="M33.500 27.200h6" fill="none" stroke="#7f9fcf" stroke-width=".5"/>
<path d="M47 20.800l.55 1.150 1.250.15-.9.850.25 1.250-1.150-.6-1.150.6.250-1.250-.9-.850 1.250-.15z" fill="#fff"/>
<text x="18.300" y="60.100" font-family="Liberation Sans,sans-serif" font-size="10.800" fill="#fff" textLength="31.500" lengthAdjust="spacingAndGlyphs">NRAO</text>
<circle cx="70.65" cy="42.40" r="1.35" fill="#e4bf38"/>
<circle cx="74.06" cy="43.08" r="1.35" fill="#e4bf38"/>
<circle cx="76.94" cy="45.01" r="1.35" fill="#e4bf38"/>
<circle cx="78.87" cy="47.89" r="1.35" fill="#e4bf38"/>
<circle cx="79.55" cy="51.30" r="1.35" fill="#e4bf38"/>
<circle cx="78.87" cy="54.71" r="1.35" fill="#e4bf38"/>
<circle cx="76.94" cy="57.59" r="1.35" fill="#e4bf38"/>
<circle cx="74.06" cy="59.52" r="1.35" fill="#e4bf38"/>
<circle cx="70.65" cy="60.20" r="1.35" fill="#e4bf38"/>
<circle cx="67.24" cy="59.52" r="1.35" fill="#e4bf38"/>
<circle cx="64.36" cy="57.59" r="1.35" fill="#e4bf38"/>
<circle cx="62.43" cy="54.71" r="1.35" fill="#e4bf38"/>
<circle cx="61.75" cy="51.30" r="1.35" fill="#e4bf38"/>
<circle cx="62.43" cy="47.89" r="1.35" fill="#e4bf38"/>
<circle cx="64.36" cy="45.01" r="1.35" fill="#e4bf38"/>
<circle cx="67.24" cy="43.08" r="1.35" fill="#e4bf38"/>
<circle cx="70.65" cy="51.3" r="7.4" fill="#caa32c" opacity=".55"/>
<circle cx="70.65" cy="51.3" r="6.9" fill="url(#globe)"/>
<text x="70.65" y="53.699999999999996" text-anchor="middle" font-family="Liberation Serif,serif" font-weight="bold" font-size="6.8" fill="#fff">NSF</text>
<text x="59.2" y="28.7" font-family="Liberation Sans,sans-serif" font-weight="bold" font-size="11" fill="#fff" stroke="#fff" stroke-width=".3" textLength="230.5" lengthAdjust="spacing">National Radio Astronomy Observatory</text>
<text x="59.3" y="37.2" font-family="Liberation Sans,sans-serif" font-size="7.2" fill="#f4f4f4" textLength="226.8" lengthAdjust="spacing">Enabling forefront research into the Universe at radio wavelengths</text>
<text x="633.1" y="6.6" font-family="Liberation Sans,sans-serif" font-size="6.9" fill="#e4e4e4" textLength="49.4" lengthAdjust="spacing">version: 4.3.6.1</text>
</svg>
</div>
<span class="nav" style="left:46.5px;top:140.9px">Archive Access Tool</span>
<span class="nav" style="left:151.7px;top:140.9px">Back</span>
<svg class="ic" style="left:563.3px;top:142.1px;width:10.6px;height:9.4px" viewBox="0 0 10.6 9.4"><path d="M5.900 .8h2.300a1.600 1.600 0 0 1 1.600 1.600v4.600a1.600 1.600 0 0 1-1.600 1.600H5.900" fill="none" stroke="#eee" stroke-width="1.5"/><path d="M0 3.600h3.500V1.500L7.300 4.700 3.500 7.900V5.800H0z" fill="#eee"/></svg>
<span class="nav" style="left:575.7px;top:142.7px">Log In</span>
<svg class="ic" style="left:627.6px;top:142.3px;width:9.2px;height:9.2px" viewBox="0 0 9 9"><circle cx="4.5" cy="4.5" r="4.4" fill="#eee"/><path d="M3 3.5a1.5 1.4 0 1 1 2.3 1.2c-.5.3-.8.5-.8 1.1" fill="none" stroke="#151b2a" stroke-width="1.2"/><rect x="3.9" y="6.4" width="1.2" height="1.2" fill="#151b2a"/></svg>
<span class="nav" style="left:640px;top:142.7px">Help</span>
<svg class="ic" style="left:685px;top:141.3px;width:10px;height:10px" viewBox="0 0 10 10"><path d="M5 .2L10.100 5.300H-.1z" fill="#eee"/><path d="M7.500 1.100h1.400v3H7.500z" fill="#eee"/><path d="M1.300 4.400h7.400v5.400H6V6.700H4v3.100H1.300z" fill="#eee"/></svg>
<span class="nav" style="left:697.2px;top:142.7px">About</span>

<div class="box" style="left:38px;top:179px;width:691.7px;height:18px;border-color:#dcdcdc;background:#fff"></div>
<div class="box" style="left:38px;top:179px;width:21px;height:18px;border-color:#dcdcdc;background:#efefef;border-radius:1.6px 0 0 1.6px"></div>
<svg class="ic" style="left:44.9px;top:184.1px;width:7.6px;height:7.6px" viewBox="0 0 7.6 7.6"><circle cx="3" cy="3" r="2.3" fill="none" stroke="#444" stroke-width="1.1"/><path d="M4.7 4.7l2.4 2.4" stroke="#444" stroke-width="1.3" stroke-linecap="round"/></svg>

<div class="box" style="left:38.2px;top:205px;width:691.5px;height:29.5px;border-color:#e8e8e8;background:#f5f5f5"></div>
<span class="t" style="left:43.5px;top:213px;color:#333">Active Search Inputs:</span>
<div class="box" style="left:114px;top:210px;width:65.5px;height:16px;border-color:#e0e0e0;background:#f4f4f4;border-radius:2px 0 0 2px"></div>
<span class="t" style="left:117.3px;top:213px;color:#222"><b>Telescope:</b> ALMA</span>
<div class="box" style="left:179px;top:210px;width:17.4px;height:16px;border-color:#dcdcdc;background:#fff;border-radius:0 2px 2px 0"></div>
<svg class="ic" style="left:184.9px;top:214.7px;width:5.2px;height:5.2px" viewBox="0 0 5.2 5.2"><path d="M.7.7l3.800 3.800M4.500.7L.7 4.500" stroke="#111" stroke-width="1.5"/></svg>

<div style="position:absolute;left:38.2px;top:246px;width:691.5px;height:17px;background:#00133f;border-radius:1.8px"></div>
<span class="t w" style="left:341.9px;top:249px;color:#f4f4f8">▼ Show Search Inputs ▼</span>

<div class="box" style="left:38px;top:271px;width:185.5px;height:17.6px;border-color:#dedede;background:#fff"></div>
<div style="position:absolute;left:95px;top:271px;width:1px;height:17.6px;background:#dedede"></div>
<div style="position:absolute;left:168px;top:271px;width:1px;height:17.6px;background:#dedede"></div>
<span class="t" style="left:45.5px;top:274.2px;color:#8a8a8a">View Projects</span>
<span class="t" style="left:102.5px;top:274.2px">View Observations</span>
<span class="t" style="left:175.7px;top:274.2px">View Images</span>

<div style="position:absolute;left:368px;top:271.3px;width:100.5px;height:17.4px;background:#0a2782;border-radius:1.8px;overflow:hidden">
  <div style="position:absolute;left:0;top:0;width:32px;height:17.4px;background:#5b74ad"></div>
  <div style="position:absolute;left:17.3px;top:0;width:.6px;height:17.4px;background:#4a64a0"></div>
  <div style="position:absolute;left:32px;top:0;width:.6px;height:17.4px;background:#08236f"></div>
  <div style="position:absolute;left:68px;top:0;width:.6px;height:17.4px;background:#08236f"></div>
  <div style="position:absolute;left:83px;top:0;width:.6px;height:17.4px;background:#08236f"></div>
</div>
<span class="t pg" style="left:375px;top:274.8px;color:#e4e9f5">«</span>
<span class="t pg" style="left:391.6px;top:274.8px;color:#e4e9f5">‹</span>
<span class="t w" style="left:406.7px;top:274.6px;color:#fff">Page 1</span>
<span class="t pg" style="left:442.8px;top:274.8px;color:#fff">›</span>
<span class="t pg" style="left:458px;top:274.8px;color:#fff">»</span>

<div class="box" style="left:613px;top:271px;width:116.7px;height:17.6px;border-color:#dedede;background:#eeeeee"></div>
<div style="position:absolute;left:643px;top:271px;width:21.3px;height:17.6px;background:#0a2782"></div>
<span class="t" style="left:620px;top:274.6px;color:#444">Show</span>
<span class="t w" style="left:649.6px;top:274.6px;color:#fff">25</span>
<span class="t" style="left:670px;top:274.6px;color:#444">of <b style="color:#222">4965</b> Projects</span>

<!-- table header -->
<svg class="sort" style="left:63.2px;top:311.9px" viewBox="0 0 16 14" preserveAspectRatio="none"><path d="M4.500 .8v11.500M1 8.600L4.500 12.600 8 8.600M11.500 13.200V1.700M8 5.400L11.500 1.400 15 5.400" fill="none" stroke="#2a2a2a" stroke-width="1.7"/></svg>
<span class="t b" style="left:72.7px;top:310.8px">Project</span>
<svg class="sort" style="left:124px;top:301.3px" viewBox="0 0 16 14" preserveAspectRatio="none"><path d="M4.500 .8v11.500M1 8.600L4.500 12.600 8 8.600M11.500 13.200V1.700M8 5.400L11.500 1.400 15 5.400" fill="none" stroke="#2a2a2a" stroke-width="1.7"/></svg>
<span class="t b" style="left:124px;top:310.8px">Instrument</span>
<span class="t b" style="left:179px;top:310.8px">Title</span>
<svg class="sort" style="left:510.6px;top:311.9px" viewBox="0 0 16 14" preserveAspectRatio="none"><path d="M4.500 .8v11.500M1 8.600L4.500 12.600 8 8.600M11.500 13.200V1.700M8 5.400L11.500 1.400 15 5.400" fill="none" stroke="#2a2a2a" stroke-width="1.7"/></svg>
<span class="t b" style="left:520.3px;top:310.8px">First Obs</span>
<svg class="sort" style="left:575.6px;top:311.9px" viewBox="0 0 16 14" preserveAspectRatio="none"><path d="M4.500 .8v11.500M1 8.600L4.500 12.600 8 8.600M11.500 13.200V1.700M8 5.400L11.500 1.400 15 5.400" fill="none" stroke="#2a2a2a" stroke-width="1.7"/></svg>
<span class="t b" style="left:585px;top:310.8px">Last Obs</span>
<div style="position:absolute;left:38.2px;top:324.6px;width:691.3px;height:1px;background:#dcdcdc"></div>
<div class="row odd" style="top:325.50px"><span class="plus"><svg viewBox="0 0 6.400 6.400"><path d="M3.200 .1v6.200M.1 3.200h6.200" stroke="#111" stroke-width="1.4"/></svg></span><span class="t" style="left:25.05px">2024.1.01353.S</span><span class="t" style="left:85.8px">ALMA</span><span class="t" style="left:140.8px">Temperature of prestellar cores in 70 m-dark high-mass clumps</span><span class="t" style="left:472.4px">2024-11-20</span><span class="t l2" style="left:472.4px">15:23</span><span class="t" style="left:537.4px">2025-08-14</span><span class="t l2" style="left:537.4px">04:48</span><span class="badge">25 execution blocks</span><svg class="lock" viewBox="0 0 7 7.600"><path d="M1.650 3.200V2.400a1.850 1.850 0 0 1 3.700 0V3.200" fill="none" stroke="#000" stroke-width="1.3"/><rect x="0" y="2.900" width="7" height="4.700" rx=".55" fill="#000"/></svg></div>
<div class="row" style="top:355.10px"><span class="plus"><svg viewBox="0 0 6.400 6.400"><path d="M3.200 .1v6.200M.1 3.200h6.200" stroke="#111" stroke-width="1.4"/></svg></span><span class="t" style="left:25.05px">2024.1.01440.S</span><span class="t" style="left:85.8px">ALMA</span><span class="t" style="left:140.8px">Extended molecular gas in a multi-phase tail of an iconic jellyfish galaxy</span><span class="t" style="left:472.4px">2025-04-03</span><span class="t l2" style="left:472.4px">04:19</span><span class="t" style="left:537.4px">2025-08-13</span><span class="t l2" style="left:537.4px">19:42</span><span class="badge">40 execution blocks</span><svg class="lock" viewBox="0 0 7 7.600"><path d="M1.650 3.200V2.400a1.850 1.850 0 0 1 3.700 0V3.200" fill="none" stroke="#000" stroke-width="1.3"/><rect x="0" y="2.900" width="7" height="4.700" rx=".55" fill="#000"/></svg></div>
<div class="row odd" style="top:384.70px"><span class="plus"><svg viewBox="0 0 6.400 6.400"><path d="M3.200 .1v6.200M.1 3.200h6.200" stroke="#111" stroke-width="1.4"/></svg></span><span class="t" style="left:25.05px">2024.1.01154.S</span><span class="t" style="left:85.8px">ALMA</span><span class="t" style="left:140.8px">CO(1-0) mapping toward the Antennae tidal tails</span><span class="t" style="left:472.4px">2024-10-29</span><span class="t l2" style="left:472.4px">12:58</span><span class="t" style="left:537.4px">2025-08-12</span><span class="t l2" style="left:537.4px">17:19</span><span class="badge">326 execution blocks</span><svg class="lock" viewBox="0 0 7 7.600"><path d="M1.650 3.200V2.400a1.850 1.850 0 0 1 3.700 0V3.200" fill="none" stroke="#000" stroke-width="1.3"/><rect x="0" y="2.900" width="7" height="4.700" rx=".55" fill="#000"/></svg></div>
<div class="row" style="top:414.30px"><span class="plus"><svg viewBox="0 0 6.400 6.400"><path d="M3.200 .1v6.200M.1 3.200h6.200" stroke="#111" stroke-width="1.4"/></svg></span><span class="t" style="left:25.05px">2024.1.00684.S</span><span class="t" style="left:85.8px">ALMA</span><span class="t" style="left:140.8px">The calm before the storm: diving into the centre of a pre-stellar core</span><span class="t" style="left:472.4px">2025-04-18</span><span class="t l2" style="left:472.4px">21:13</span><span class="t" style="left:537.4px">2025-08-12</span><span class="t l2" style="left:537.4px">14:50</span><span class="badge">29 execution blocks</span><svg class="lock" viewBox="0 0 7 7.600"><path d="M1.650 3.200V2.400a1.850 1.850 0 0 1 3.700 0V3.200" fill="none" stroke="#000" stroke-width="1.3"/><rect x="0" y="2.900" width="7" height="4.700" rx=".55" fill="#000"/></svg></div>
<div class="row odd" style="top:443.90px"><span class="plus"><svg viewBox="0 0 6.400 6.400"><path d="M3.200 .1v6.200M.1 3.200h6.200" stroke="#111" stroke-width="1.4"/></svg></span><span class="t" style="left:25.05px">2024.1.00415.S</span><span class="t" style="left:85.8px">ALMA</span><span class="t" style="left:140.8px">A study of molecular clouds in the SNR IC443: toward understanding the cosmic-ray acceleration</span><span class="t l2" style="left:140.8px">efficiency</span><span class="t" style="left:472.4px">2025-01-15</span><span class="t l2" style="left:472.4px">04:24</span><span class="t" style="left:537.4px">2025-08-12</span><span class="t l2" style="left:537.4px">14:43</span><span class="badge">87 execution blocks</span><svg class="lock" viewBox="0 0 7 7.600"><path d="M1.650 3.200V2.400a1.850 1.850 0 0 1 3.700 0V3.200" fill="none" stroke="#000" stroke-width="1.3"/><rect x="0" y="2.900" width="7" height="4.700" rx=".55" fill="#000"/></svg></div>
<div class="row" style="top:473.50px"><span class="plus"><svg viewBox="0 0 6.400 6.400"><path d="M3.200 .1v6.200M.1 3.200h6.200" stroke="#111" stroke-width="1.4"/></svg></span><span class="badge" style="width:66.5px"></span><svg class="lock" viewBox="0 0 7 7.600"><path d="M1.650 3.200V2.400a1.850 1.850 0 0 1 3.700 0V3.200" fill="none" stroke="#000" stroke-width="1.3"/><rect x="0" y="2.900" width="7" height="4.700" rx=".55" fill="#000"/></svg></div>
<div id="scroll"><div></div></div>
</div>
</body>
</html>
